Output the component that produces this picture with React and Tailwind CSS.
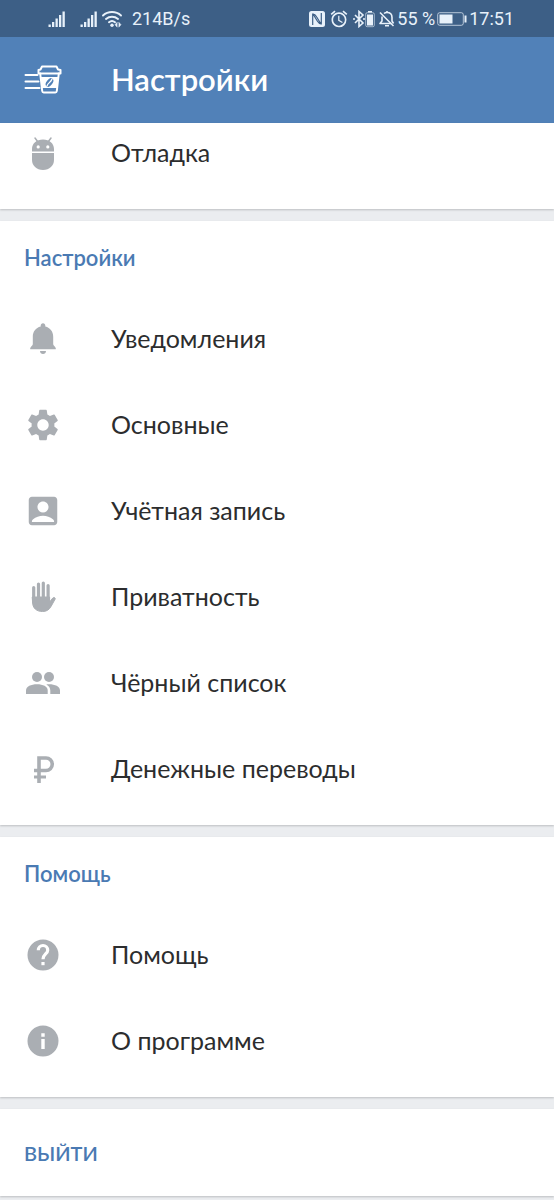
import { MdAccountBox, MdAlarm, MdSettings } from "react-icons/md";

function DebugIcon() {
  return (
    <svg className="size-[38px]" viewBox="0 0 38 38" fill="currentColor">
      <path
        d="M11 4l3 4M27 4l-3 4"
        stroke="currentColor"
        strokeWidth="1.500"
        strokeLinecap="round"
      />
      <path
        fillRule="evenodd"
        d="M8 17.500V15c0-5.500 4.500-9.500 11-9.500S30 9.500 30 15v2.500zM14.200 11.300a1.600 1.600 0 1 0 0 3.200 1.600 1.600 0 0 0 0-3.200zM23.800 11.300a1.600 1.600 0 1 0 0 3.200 1.600 1.600 0 0 0 0-3.200z"
      />
      <path d="M8 19h22v7c0 5.500-4.500 10-11 10S8 31.500 8 26z" />
    </svg>
  );
}

function BellIcon() {
  return (
    <svg className="size-[38px]" viewBox="0 0 38 38" fill="currentColor">
      <path d="M19 3.200c1.400 0 2.300 1 2.300 2.300v1c5 1.200 7.900 5.200 7.900 10.200v7.500c0 1.500 2.700 2.600 2.700 4.500 0 .400-.300.600-.700.600H6.800c-.400 0-.700-.200-.700-.600 0-1.900 2.700-3 2.700-4.500v-7.500c0-5 2.900-9 7.900-10.200v-1c0-1.300.900-2.300 2.300-2.300z" />
      <path d="M16 31h6c0 1.700-1.300 3-3 3s-3-1.300-3-3z" />
    </svg>
  );
}

function HandIcon() {
  return (
    <svg
      className="size-[38px]"
      viewBox="0 0 38 38"
      fill="currentColor"
      stroke="currentColor"
      strokeLinecap="round"
      strokeLinejoin="round"
    >
      <path
        fill="none"
        strokeWidth="3.200"
        d="M9.700 9.500V24M14.500 6v16M19.300 5v17M24.100 7.500V22"
      />
      <path
        strokeWidth="1"
        d="M8.600 19h17v5l3.200-4c1-1.200 2.700-.300 2.400 1l-4.200 7.500c-2 3.500-4.500 5-8.500 5-6.200 0-9.900-3.500-9.900-9z"
      />
    </svg>
  );
}

function PeopleIcon() {
  return (
    <svg className="size-[38px]" viewBox="0 0 38 38" fill="currentColor">
      <circle cx="13" cy="13" r="5" />
      <circle cx="25" cy="13" r="5" />
      <path d="M2 30v-3.500C2 22.500 7 20.300 13 20.300s10.700 2.200 10.700 6.200V30z" />
      <path d="M22.300 20.500c.900-.100 1.800-.200 2.700-.200 6 0 11 2.200 11 6.200V30h-9.700v-3.500c0-2.500-1.300-4.600-4-6z" />
    </svg>
  );
}

function RubleIcon() {
  return (
    <svg
      className="size-[38px]"
      viewBox="0 0 38 38"
      fill="none"
      stroke="currentColor"
      strokeWidth="4"
    >
      <path d="M15 33V8h7a5.700 5.700 0 0 1 0 12.500H10" strokeWidth="3.600" />
      <path d="M10 27h12" strokeWidth="3" />
    </svg>
  );
}

function HelpIcon() {
  return (
    <svg className="size-[38px]" viewBox="0 0 38 38" fill="none">
      <circle cx="19" cy="19" r="15.500" fill="currentColor" />
      <path
        d="M14.300 14.200a4.700 4.700 0 0 1 9.400 0c0 3.700-4.700 4-4.700 9"
        stroke="#fff"
        strokeWidth="3.200"
      />
      <path d="M17.400 26h3.200v3.200h-3.200z" fill="#fff" />
    </svg>
  );
}

function InfoIcon() {
  return (
    <svg className="size-[38px]" viewBox="0 0 38 38">
      <circle cx="19" cy="19" r="15.500" fill="currentColor" />
      <path d="M17.300 11.300h3.400v3.400h-3.400zM17.300 17h3.400v10h-3.400z" fill="#fff" />
    </svg>
  );
}

function CoffeeMenuIcon() {
  return (
    <svg
      className="h-[32px] w-[40px]"
      viewBox="0 0 40 32"
      fill="none"
      stroke="#fff"
      strokeWidth="2"
      strokeLinecap="round"
      strokeLinejoin="round"
    >
      <path d="M1.500 11h12M1.500 17.500h13M1.500 24h14" />
      <path d="M18 2.500h14.500l1.500 3 2.500.500v3.500H14.500V6l2-.500z" />
      <path d="M16.200 9.500l2 17.500c.100.900.600 1.500 1.500 1.500h11.600c.900 0 1.400-.600 1.500-1.500l2-17.500" />
      <path d="M17 13h17l-1 11H18z" fill="#fff" stroke="none" />
      <ellipse
        cx="25.500"
        cy="18.500"
        rx="3"
        ry="4.800"
        transform="rotate(38 25.500 18.500)"
        fill="#5181b8"
        stroke="none"
      />
      <path d="M23 22c.800-3.500 4-3.500 5-7" strokeWidth="1.200" />
    </svg>
  );
}

function SignalIcon() {
  return (
    <svg className="h-[18px] w-[18px]" viewBox="0 0 18 18" fill="currentColor">
      <path d="M.500 14.500h2.300V17H.500zM4 12h2.300v5H4zM7.500 8.500h2.300V17H7.500zM11 5h2.300v12H11zM14.500 1.500h2.300V17h-2.300z" />
    </svg>
  );
}

function WifiIcon() {
  return (
    <svg
      className="h-[18px] w-[20px]"
      viewBox="0 0 20 18"
      fill="none"
      stroke="currentColor"
      strokeWidth="1.900"
      strokeLinecap="round"
    >
      <path d="M1 5.500c5-4.600 13-4.600 18 0M4 9c3.500-3 8.500-3 12 0M7 12.200c1.800-1.500 4.200-1.500 6 0" />
      <circle cx="10" cy="15.300" r="1.700" fill="currentColor" stroke="none" />
      <path
        d="M15 12.500l-2 2.200 2 2.200zM17 12.500l2 2.200-2 2.200z"
        fill="currentColor"
        strokeWidth=".500"
      />
    </svg>
  );
}

function NfcIcon() {
  return (
    <svg className="h-[18px] w-[16px]" viewBox="0 0 16 18" fill="none">
      <rect y="1" width="16" height="16" rx="2.500" fill="currentColor" />
      <path
        d="M3.700 15V4.200c2 0 3 1 4 2.800l4.600 7.500M12.300 3v10.800c-2 0-3-1-4-2.800L3.700 3.500"
        stroke="#3d5f86"
        strokeWidth="1.200"
      />
    </svg>
  );
}

function BluetoothIcon() {
  return (
    <svg
      className="h-[18px] w-[12px]"
      viewBox="0 0 12 18"
      fill="none"
      stroke="currentColor"
      strokeWidth="1.600"
    >
      <path d="M2 5l8 8-4 3.500v-15L10 5l-8 8" />
      <path d="M0 9h2M10 9h2" />
    </svg>
  );
}

function DeviceBatteryIcon() {
  return (
    <svg className="h-[18px] w-[10px]" viewBox="0 0 10 18" fill="none">
      <path d="M3 1h4v1.500H3z" fill="currentColor" />
      <rect x="0.700" y="2.700" width="8.600" height="14" rx="1.500" stroke="currentColor" strokeOpacity=".6" />
      <path d="M2 4.500h6v11H2z" fill="currentColor" />
    </svg>
  );
}

function MutedBellIcon() {
  return (
    <svg
      className="h-[18px] w-[16px]"
      viewBox="0 0 16 18"
      fill="none"
      stroke="currentColor"
      strokeWidth="1.600"
      strokeLinejoin="round"
    >
      <path d="M3 6.500V11l-2 2.500h11.500M5 3.500c.700-.600 1.500-1 3-1 3 0 5 2 5 5V11l1.500 2.500" />
      <path d="M6 15.700h4M8 1v1.500M1 2.500L14.500 16" />
    </svg>
  );
}

function BatteryIcon() {
  return (
    <svg className="h-[18px] w-[30px]" viewBox="0 0 30 18" fill="none">
      <rect x="0.700" y="2.700" width="25.600" height="12.600" rx="2" stroke="currentColor" strokeOpacity=".7" />
      <rect x="2.500" y="4.500" width="13" height="9" fill="currentColor" />
      <path d="M28.500 5.500v7" stroke="currentColor" strokeWidth="2" />
    </svg>
  );
}

const settingsItems = [
  { label: "Уведомления", icon: <BellIcon /> },
  { label: "Основные", icon: <MdSettings className="size-[38px]" /> },
  { label: "Учётная запись", icon: <MdAccountBox className="size-[38px]" /> },
  { label: "Приватность", icon: <HandIcon /> },
  { label: "Чёрный список", icon: <PeopleIcon /> },
  { label: "Денежные переводы", icon: <RubleIcon /> },
];

const helpItems = [
  { label: "Помощь", icon: <HelpIcon /> },
  { label: "О программе", icon: <InfoIcon /> },
];

function StatusBar() {
  return (
    <div className="flex h-[37px] items-center justify-between bg-[#3d5f86] pl-12 pr-10 font-[Roboto,sans-serif] text-lg text-[#e8f1fa]">
      <div className="flex items-center">
        <SignalIcon />
        <span className="ml-[14px] flex items-center gap-1">
          <SignalIcon />
          <WifiIcon />
        </span>
        <span className="ml-[10px]">214B/s</span>
      </div>
      <div className="flex items-center gap-0.5">
        <span className="flex items-center gap-1">
          <NfcIcon />
          <MdAlarm className="size-[20px]" />
          <span className="flex items-center">
            <BluetoothIcon />
            <DeviceBatteryIcon />
          </span>
          <MutedBellIcon />
        </span>
        <span>55 %</span>
        <BatteryIcon />
        <span>17:51</span>
      </div>
    </div>
  );
}

function MenuRow({ icon, label }) {
  return (
    <button
      type="button"
      className="flex h-[86px] w-full items-center gap-[49px] pl-6 text-left text-[25px] text-[#2c2d2e]"
    >
      <span className="text-[#aaaeb3]">{icon}</span>
      {label}
    </button>
  );
}

function Section({ title, items }) {
  return (
    <section className="bg-white pb-[13px] shadow-[0_1px_2px_rgba(0,0,0,0.2)]">
      <h2 className="flex h-[75px] items-center pb-0.5 pl-6 text-[22px] font-semibold text-[#4a7ab3]">
        {title}
      </h2>
      {items.map((item) => (
        <MenuRow key={item.label} icon={item.icon} label={item.label} />
      ))}
    </section>
  );
}

export default function App() {
  return (
    <div className="min-h-screen bg-[#ebedf0] font-[Lato,sans-serif]">
      <StatusBar />
      <header className="flex h-[86px] items-center gap-[47px] bg-[#5181b8] pl-6 text-white">
        <button type="button" aria-label="Меню">
          <CoffeeMenuIcon />
        </button>
        <h1 className="pb-0.5 text-[31px] font-semibold">Настройки</h1>
      </header>

      <main className="flex flex-col gap-3">
        <section className="bg-white pb-[26px] shadow-[0_1px_2px_rgba(0,0,0,0.2)]">
          <button
            type="button"
            className="flex h-[60px] w-full items-center gap-[49px] pl-6 text-left text-[25px] text-[#2c2d2e]"
          >
            <span className="text-[#aaaeb3]">
              <DebugIcon />
            </span>
            Отладка
          </button>
        </section>
        <Section title="Настройки" items={settingsItems} />
        <Section title="Помощь" items={helpItems} />
        <section className="bg-white shadow-[0_1px_2px_rgba(0,0,0,0.2)]">
          <button
            type="button"
            className="flex h-[87px] w-full items-center pl-6 text-left text-[20px] font-semibold text-[#4a7ab3]"
          >
            ВЫЙТИ
          </button>
        </section>
      </main>
    </div>
  );
}
